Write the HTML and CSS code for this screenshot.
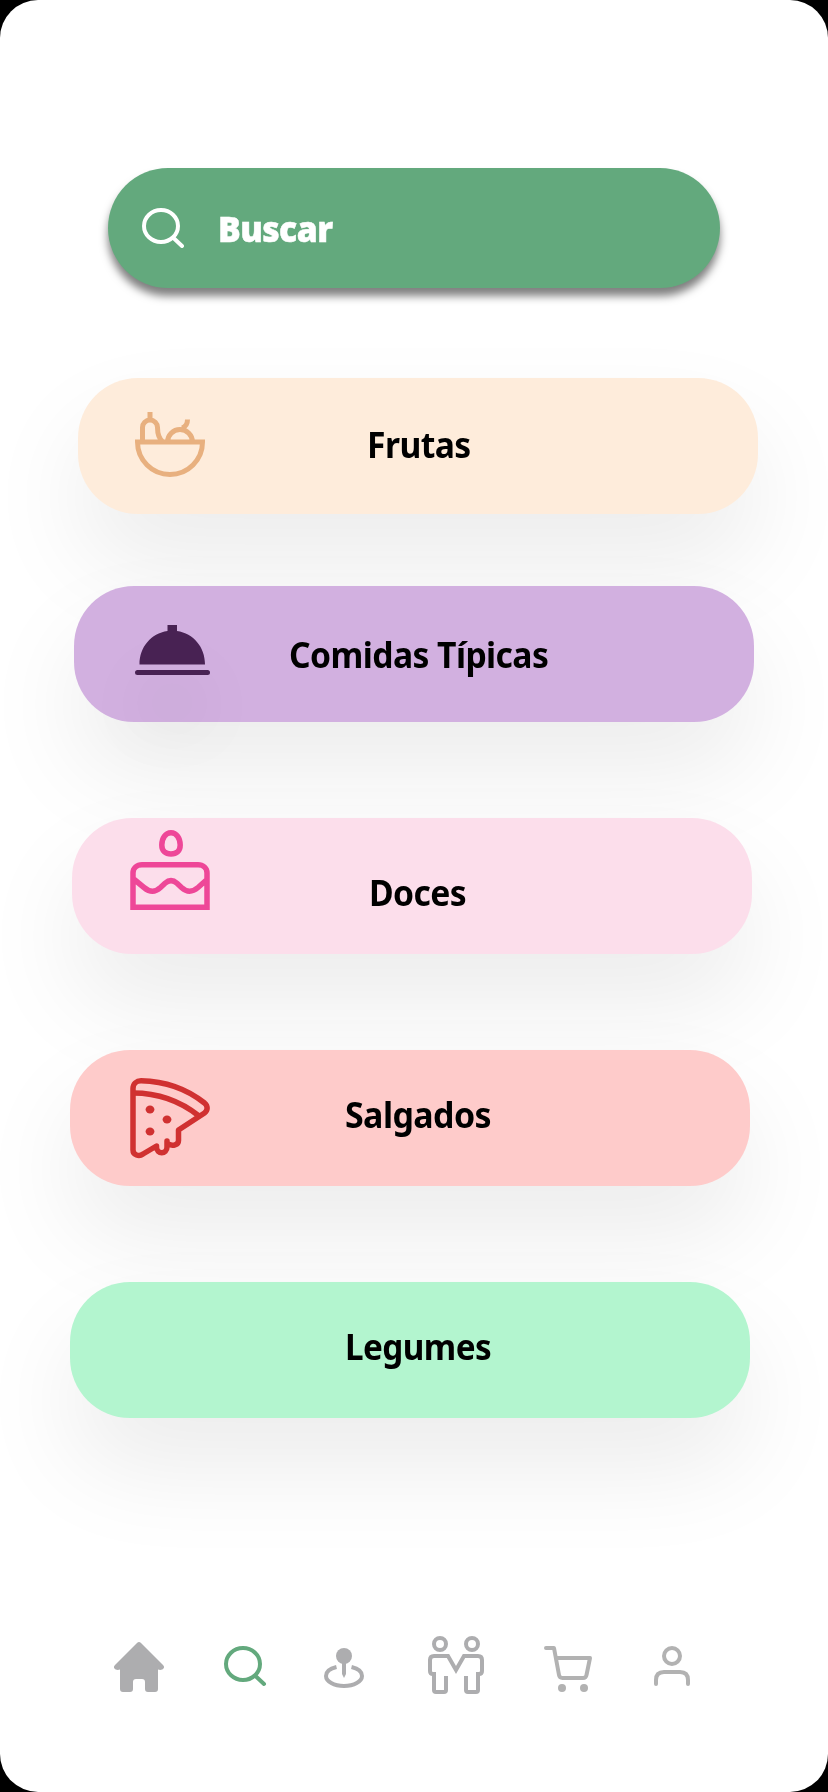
FILE: index.html
```html
<!DOCTYPE html>
<html lang="pt-BR">
<head>
<meta charset="utf-8">
<title>Buscar</title>
<link rel="stylesheet" href="styles.css">
</head>
<body>
<main class="screen">
  <label class="search">
    <svg class="search-icon" viewBox="0 0 42 40" fill="none" stroke="currentColor" stroke-width="4" stroke-linecap="round"><ellipse cx="19" cy="18" rx="17" ry="16"/><path d="M31.500 30 40 38"/></svg>
    <span class="search-text">Buscar</span>
  </label>
  <section class="cards">
    <a class="card frutas">
      <svg class="icon" width="70" height="65" viewBox="0 0 70 65" fill="none" stroke="#e8b07f" stroke-width="5"><path d="M2.500 30h65a32.500 32.500 0 0 1-65 0zM7.500 30V15.500a7.500 7.500 0 0 1 15 0c0 6 1 11 5.500 14.500M15 8V0M32.500 30a12.500 12.500 0 0 1 25 0M47 16c3-1 5.500-4 5.500-8.500"/></svg>
      <span class="label">Frutas</span>
    </a>
    <a class="card comidas">
      <svg class="icon cloche" width="75" height="50" viewBox="0 0 75 50" fill="#482253"><path d="M4.500 39.500C4.500 22 16 8.500 32.500 6V0h9.500v6C58.500 8.500 70 22 70 39.500z"/><rect y="45" width="75" height="5" rx="2.500"/></svg>
      <span class="label">Comidas Típicas</span>
    </a>
    <a class="card doces">
      <svg class="icon" width="80" height="80" viewBox="0 0 80 80" fill="none" stroke="#ee4798" stroke-width="5.500"><path d="M3 77.300V43c0-5 4-8.300 9-8.300h56c5 0 9 3.300 9 8.300v34.300zM3 48.500 14 57.500c6 5 11 5 16.500 0l4.500-4.300c4-3.500 8-3.500 12 0l4.500 4.300c5.500 5 10.500 5 16.500 0l9-8M41 2.700c-5.500 0-9.200 5.500-9.200 12.300 0 6 3.700 9 9.200 9s9.200-3 9.200-9C50.200 8.200 46.500 2.700 41 2.700z"/></svg>
      <span class="label">Doces</span>
    </a>
    <a class="card salgados">
      <svg class="icon" width="80" height="80" viewBox="0 0 80 80" fill="none" stroke="#d03131" stroke-width="5.500" stroke-linecap="round" stroke-linejoin="round"><path d="M3 72V10.500C3 6 6.500 2.700 11 2.700c23 .5 46 8.300 63.500 22.300 3.500 3 3.500 7 0 10L48.500 52v10.500c0 4.500-6 6-10 3.500M37 63v6c0 7.500-10.500 7.500-10.500 0v-1L13 76C9 79 3 77 3 72"/><path stroke-linecap="butt" d="M3 15c24 0 46 7 66 23"/><g fill="#d03131" stroke="none"><ellipse cx="20" cy="31.500" rx="4.400" ry="4"/><ellipse cx="37" cy="41.500" rx="4.400" ry="4"/><ellipse cx="20" cy="53.500" rx="4.400" ry="4"/></g></svg>
      <span class="label">Salgados</span>
    </a>
    <a class="card legumes"><span class="label">Legumes</span></a>
  </section>
  <nav class="tabs">
    <svg class="tab home" width="50" height="50" viewBox="0 0 50 50" fill="#adadaf"><path d="M23 1Q25 -1 27 1L49 23c3 3-1 6-5 4.500V47q0 3-3 3h-7q-3 0-3-3v-7q0-3-3-3h-6q-3 0-3 3v7q0 3-3 3H9q-3 0-3-3V27.500C2 29-2 26 1 23z"/></svg>
    <svg class="tab find" width="42" height="40" viewBox="0 0 42 40" fill="none" stroke="#63a97d" stroke-width="4" stroke-linecap="round"><ellipse cx="19" cy="18" rx="17" ry="16"/><path d="M31.500 30 40 38"/></svg>
    <svg class="tab place" width="40" height="40" viewBox="0 0 40 40" fill="none" stroke="#adadaf" stroke-width="4"><circle cx="20" cy="8" r="8" fill="#adadaf" stroke="none"/><path d="M18 14h4v12l-2 4-2-4z" fill="#adadaf" stroke="none"/><path d="M12.500 19C6 20.500 2 24 2 28c0 5.500 8 10 18 10s18-4.500 18-10c0-4-4-7.500-10.500-9"/></svg>
    <svg class="tab people" width="56" height="58" viewBox="0 0 56 58" fill="none" stroke="#adadaf" stroke-width="4" stroke-linejoin="round"><circle cx="12" cy="8" r="6"/><circle cx="44" cy="8" r="6"/><path stroke-linejoin="miter" d="M8 38H5q-3 0-3-3V24q0-4 4-4h14l8 14 8-14h14q4 0 4 4v11q0 3-3 3h-3"/><path d="M6 36v18q0 2 2 2h8q2 0 2-2V40M50 36v18q0 2-2 2h-8q-2 0-2-2V40"/></svg>
    <svg class="tab cart" width="48" height="46" viewBox="0 0 48 46" fill="none" stroke="#b2b2b2" stroke-width="4" stroke-linecap="round" stroke-linejoin="round"><path d="M2 2h8l5 27q.500 3 3.500 3H39q3 0 3.500-3L46 12H12"/><g fill="#b2b2b2" stroke="none"><circle cx="18" cy="42" r="4"/><circle cx="40" cy="42" r="4"/></g></svg>
    <svg class="tab user" width="36" height="40" viewBox="0 0 36 40" fill="none" stroke="#b2b2b2" stroke-width="4" stroke-linecap="round"><circle cx="18" cy="10" r="8"/><path d="M2 38v-4q0-8 8-8h16q8 0 8 8v4"/></svg>
  </nav>
</main>
</body>
</html>
```
FILE: styles.css
```css
* { box-sizing: border-box; }
body { margin: 0; background: #000; font-family: "Noto Sans", "Open Sans", sans-serif; }
.screen { width: 828px; height: 1792px; overflow: hidden; border-radius: 38px; background: #fff; padding-top: 168px; }
.search { display: flex; align-items: center; width: 612px; height: 120px; margin-left: 108px; padding-left: 34px; border-radius: 60px; background: #63a97d; color: #fff; box-shadow: 0 8px 8px rgba(0, 0, 0, .5); }
.search-icon { width: 42px; height: 40px; }
.search-text { margin-left: 34px; padding-top: 1px; font-size: 35px; font-weight: 900; letter-spacing: -.6px; -webkit-text-stroke: .5px #fff; transform: scaleX(.965); transform-origin: left; }
.cards { display: flex; flex-direction: column; margin-top: 89.500px; }
.card { display: grid; grid-template-columns: 1fr; flex: none; width: 680px; height: 136px; border-radius: 60px; box-shadow: 0 50px 100px rgba(0, 0, 0, .08); }
.icon { grid-area: 1 / 1; overflow: visible; }
.label { grid-area: 1 / 1; justify-self: start; align-self: start; color: #000; font-size: 35px; line-height: 48px; font-weight: 700; letter-spacing: -.6px; white-space: nowrap; transform: scaleX(.962); transform-origin: left; }
.frutas { margin-left: 78px; background: #feecdb; }
.frutas .icon { margin: 34.500px 0 0 57px; }
.frutas .label { margin: 43px 0 0 289px; }
.comidas { margin: 72px 0 0 74px; background: #d2b0e0; }
.comidas .icon { margin: 39.500px 0 0 61px; }
.comidas .label { margin: 45px 0 0 214.500px; }
.cloche { filter: drop-shadow(0 50px 30px rgba(0, 0, 0, .05)); }
.doces { margin: 96px 0 0 72px; background: #fcdeeb; }
.doces .icon { margin: 12.500px 0 0 58px; }
.doces .label { margin: 51px 0 0 297px; }
.salgados { margin: 96px 0 0 70px; background: #fecbca; }
.salgados .icon { margin: 28.500px 0 0 60px; }
.salgados .label { margin: 41px 0 0 275px; transform: scaleX(.97); }
.legumes { margin: 96px 0 0 70px; background: #b3f5cf; }
.legumes .label { margin: 41px 0 0 275px; transform: scaleX(.95); }
.tabs { display: flex; align-items: flex-start; margin-top: 218.500px; padding-left: 114px; }
.tab { flex: none; overflow: visible; }
.home { margin-top: 6px; }
.find { margin: 10px 0 0 60px; }
.place { margin: 12px 0 0 58px; }
.people { margin-left: 64px; }
.cart { margin: 10px 0 0 60px; }
.user { margin: 10px 0 0 62px; }
```
